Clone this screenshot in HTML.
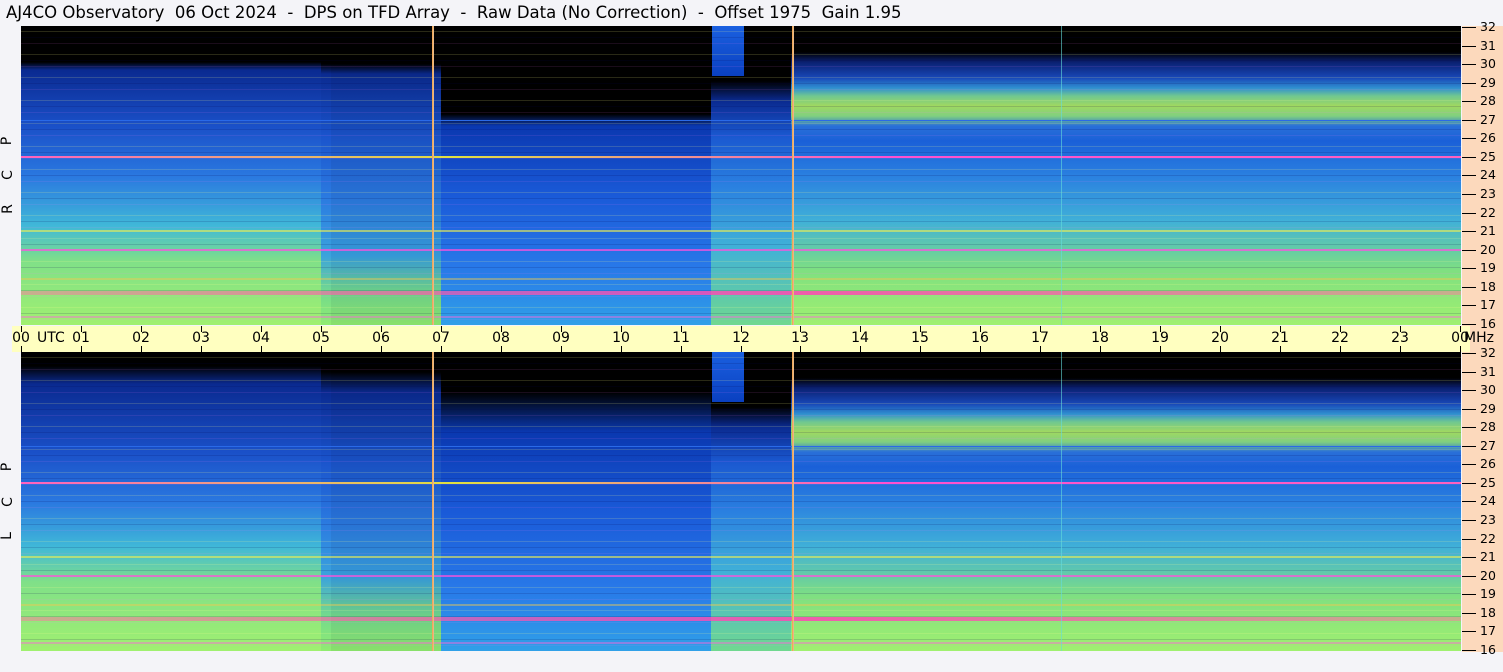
<!DOCTYPE html>
<html><head><style>
*{margin:0;padding:0;box-sizing:border-box}
body{width:1503px;height:672px;background:#f4f4f8;position:relative;overflow:hidden;font-family:"DejaVu Sans","Liberation Sans",sans-serif}
.abs{position:absolute}
.title{left:6px;top:3px;font-size:16.5px;color:#000;white-space:pre}
.panel{position:absolute;left:21px;width:1440px;height:299px;overflow:hidden;background:#000}
.col{position:absolute;top:0;height:100%}
.stripes{position:absolute;inset:0;background:repeating-linear-gradient(180deg,transparent 0 5px,rgba(255,255,140,.16) 5px 6px,transparent 6px 11px,rgba(0,0,80,.15) 11px 12px,transparent 12px 17px,rgba(255,120,255,.1) 17px 18px,transparent 18px 23px)}
.hl{position:absolute;left:0;width:100%}
.vl{position:absolute;top:0;height:100%;width:2px;background:linear-gradient(90deg,#f7a040,#e0c0a0)}
.right{left:1462px;top:26px;width:41px;height:626px;background:#fcd9bc}
.axis{left:12px;top:326px;width:1458px;height:26px;background:#ffffc0}
.fl{position:absolute;left:1480px;font-size:12.5px;line-height:12px}
.tk{position:absolute;left:1462px;width:14px;height:1px;background:#000}
.hr{position:absolute;top:331px;font-size:14px;line-height:14px;transform:translateX(-50%)}
.ht{position:absolute;width:1px;background:#000}
.side{position:absolute;left:3px;font-size:14px;transform:rotate(-90deg)}
</style></head><body>
<div class="abs title">AJ4CO Observatory  06 Oct 2024  -  DPS on TFD Array  -  Raw Data (No Correction)  -  Offset 1975  Gain 1.95</div>

<div class="abs right"></div>
<div class="abs axis"></div>

<div class="panel" style="top:26px">
 <div class="col" style="left:0;width:310px;background:linear-gradient(180deg,#000 0,#000 36px,#0a2a90 44px,#1a50c8 100px,#2a78e0 150px,#40b8d8 200px,#80e088 235px,#a0f070 299px)"></div>
 <div class="col" style="left:300px;width:130px;background:linear-gradient(180deg,#000 0,#000 38px,#0a2a90 48px,#1a54cc 110px,#2a78e0 170px,#38a0e0 230px,#70d890 265px,#90ec70 299px);opacity:.95"></div>
 <div class="col" style="left:420px;width:275px;background:linear-gradient(180deg,#000 0,#000 88px,#0a38b0 100px,#1a5ad8 170px,#2878e8 240px,#30a0e8 299px)"></div>
 <div class="col" style="left:690px;width:80px;background:linear-gradient(180deg,#000 0,#000 55px,#0a2a90 75px,#1a58d0 110px,#2a80e0 160px,#40b0d8 220px,#70d890 299px)"></div>
 <div class="col" style="left:691px;width:32px;height:50px;background:linear-gradient(180deg,#1a60e0,#0a40c0)"></div>
 <div class="col" style="left:770px;width:670px;background:linear-gradient(180deg,#000 0,#000 26px,#0a2070 36px,#1848b8 52px,#3090d0 62px,#70c890 70px,#a0d860 80px,#80d080 90px,#2a70d8 100px,#1a60d8 115px,#2a80e0 150px,#40b0d8 195px,#80e080 245px,#a0f070 299px)"></div>
 <div class="stripes"></div>
 <div class="hl" style="top:94px;height:1px;background:#2a6ae8"></div>
 <div class="hl" style="top:130px;height:2px;background:linear-gradient(90deg,#ff60c0,#e0e040 30%,#ff50d0 60%,#ff60c0)"></div>
 <div class="hl" style="top:204px;height:2px;background:rgba(240,240,80,.6)"></div>
 <div class="hl" style="top:223px;height:2px;background:rgba(255,80,220,.7)"></div>
 <div class="hl" style="top:265px;height:4px;background:linear-gradient(90deg,rgba(255,120,160,.5),rgba(255,70,180,.85) 55%,rgba(255,120,160,.5))"></div>
 <div class="hl" style="top:252px;height:2px;background:rgba(240,200,80,.45)"></div>
 <div class="hl" style="top:290px;height:2px;background:rgba(255,100,220,.45)"></div>
 <div class="vl" style="left:411px"></div>
 <div class="vl" style="left:771px"></div>
 <div class="col" style="left:1040px;width:1px;background:rgba(100,220,220,.6)"></div>
</div>

<div class="panel" style="top:352px">
 <div class="col" style="left:0;width:310px;background:linear-gradient(180deg,#000 0,#000 14px,#0a2a90 32px,#1a50c8 100px,#2a78e0 150px,#40b8d8 195px,#80e088 230px,#a0f070 299px)"></div>
 <div class="col" style="left:300px;width:130px;background:linear-gradient(180deg,#000 0,#000 20px,#0a2a90 40px,#1a54cc 110px,#2a78e0 170px,#38a0e0 225px,#70d890 262px,#90ec70 299px);opacity:.95"></div>
 <div class="col" style="left:420px;width:275px;background:linear-gradient(180deg,#000 0,#000 40px,#0a38b0 80px,#1a5ad8 160px,#2878e8 235px,#30a0e8 299px)"></div>
 <div class="col" style="left:690px;width:80px;background:linear-gradient(180deg,#000 0,#000 55px,#0a2a90 75px,#1a58d0 110px,#2a80e0 160px,#40b0d8 220px,#70d890 299px)"></div>
 <div class="col" style="left:691px;width:32px;height:50px;background:linear-gradient(180deg,#1a60e0,#0a40c0)"></div>
 <div class="col" style="left:770px;width:670px;background:linear-gradient(180deg,#000 0,#000 26px,#0a2070 36px,#1848b8 52px,#3090d0 62px,#70c890 70px,#a0d860 80px,#80d080 90px,#2a70d8 100px,#1a60d8 115px,#2a80e0 150px,#40b0d8 195px,#80e080 245px,#a0f070 299px)"></div>
 <div class="stripes"></div>
 <div class="hl" style="top:94px;height:1px;background:#2a6ae8"></div>
 <div class="hl" style="top:130px;height:2px;background:linear-gradient(90deg,#ff60c0,#e0e040 30%,#ff50d0 60%,#ff60c0)"></div>
 <div class="hl" style="top:204px;height:2px;background:rgba(240,240,80,.6)"></div>
 <div class="hl" style="top:223px;height:2px;background:rgba(255,80,220,.7)"></div>
 <div class="hl" style="top:265px;height:4px;background:linear-gradient(90deg,rgba(255,120,160,.5),rgba(255,70,180,.85) 55%,rgba(255,120,160,.5))"></div>
 <div class="hl" style="top:252px;height:2px;background:rgba(240,200,80,.45)"></div>
 <div class="hl" style="top:290px;height:2px;background:rgba(255,100,220,.45)"></div>
 <div class="vl" style="left:411px"></div>
 <div class="vl" style="left:771px"></div>
 <div class="col" style="left:1040px;width:1px;background:rgba(100,220,220,.6)"></div>
</div>

<div class="side" style="top:133px">P</div>
<div class="side" style="top:167px">C</div>
<div class="side" style="top:201px">R</div>
<div class="side" style="top:459px">P</div>
<div class="side" style="top:494px">C</div>
<div class="side" style="top:528px">L</div>

<div id="ax"></div>
<div id="fr"></div>
<script>
var h='';
var labs=['00','01','02','03','04','05','06','07','08','09','10','11','12','13','14','15','16','17','18','19','20','21','22','23','00'];
for(var i=0;i<25;i++){var x=21+i*59.96;
 h+='<div class="ht" style="left:'+Math.round(x)+'px;top:326px;height:6px"></div><div class="ht" style="left:'+Math.round(x)+'px;top:346px;height:6px"></div>';
 h+='<div class="hr" style="left:'+Math.round(x)+'px">'+labs[i]+'</div>';}
h+='<div class="hr" style="left:37px;transform:none">UTC</div><div class="hr" style="left:1464px;transform:none">MHz</div>';
document.getElementById('ax').innerHTML=h;
var f='';
[26,352].forEach(function(t){for(var m=32;m>=16;m--){var y=t+1+(32-m)*18.56;
 f+='<div class="tk" style="top:'+Math.round(y)+'px"></div><div class="fl" style="top:'+Math.round(y-6)+'px">'+m+'</div>';}});
document.getElementById('fr').innerHTML=f;
</script>
</body></html>
